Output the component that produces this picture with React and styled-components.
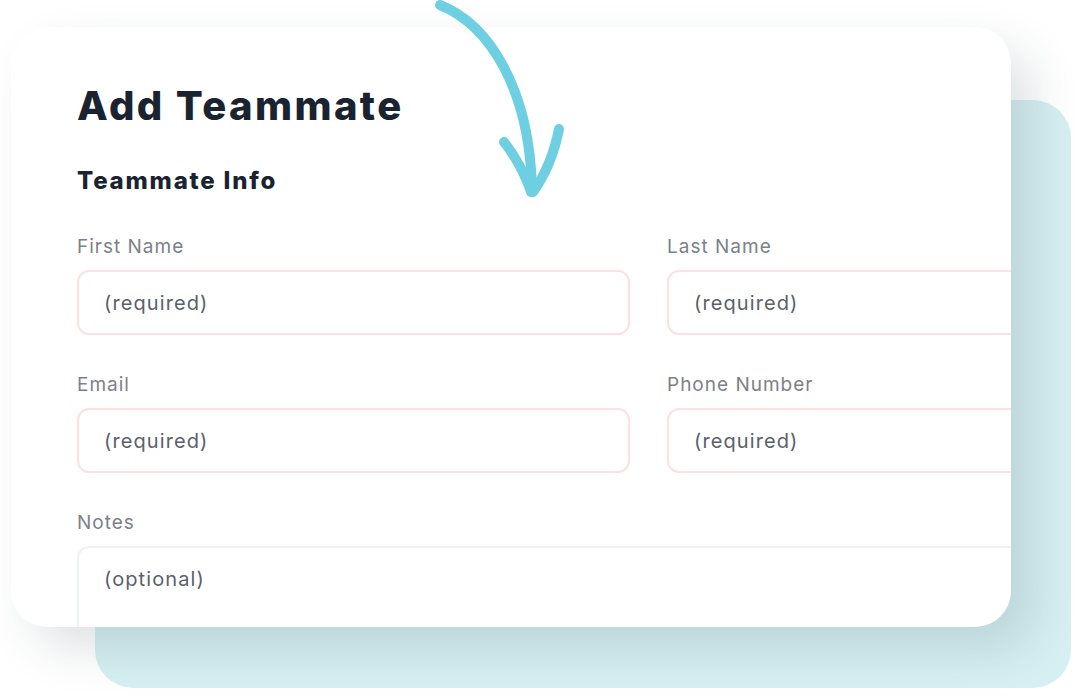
import React from 'react';
import styled, { createGlobalStyle } from 'styled-components';

const GlobalStyle = createGlobalStyle`
  html, body {
    margin: 0;
    padding: 0;
    background: #ffffff;
  }
  body {
    font-family: Inter, "Noto Sans", sans-serif;
    -webkit-font-smoothing: antialiased;
  }
`;

export const Stage = styled.div`
  position: relative;
  width: 1081px;
  height: 697px;
  overflow: hidden;
  display: grid;
  grid-template-columns: 1fr;
  grid-template-rows: 1fr;
`;

export const Backdrop = styled.div`
  grid-area: 1 / 1;
  align-self: start;
  justify-self: start;
  margin: 100px 0 0 95px;
  width: 976px;
  height: 588px;
  border-radius: 38px;
  background: #d6eff2;
`;

export const Card = styled.section`
  grid-area: 1 / 1;
  align-self: start;
  justify-self: start;
  margin: 27px 0 0 11px;
  width: 1000px;
  height: 600px;
  box-sizing: border-box;
  padding: 55px 0 0 66px;
  border-radius: 36px;
  background: #ffffff;
  overflow: hidden;
  box-shadow: 22px 22px 48px rgba(30, 55, 65, 0.14);
`;

export const Title = styled.h1`
  margin: 0;
  font-size: 40px;
  line-height: 48px;
  font-weight: 800;
  letter-spacing: 2.4px;
  color: #1a2330;
`;

export const SectionTitle = styled.h2`
  margin: 36px 0 0;
  font-size: 24px;
  line-height: 30px;
  font-weight: 800;
  letter-spacing: 1.8px;
  color: #1a2330;
`;

export const FormGrid = styled.div`
  margin-top: 39px;
  width: 1143px;
  display: grid;
  grid-template-columns: 553px 553px;
  column-gap: 37px;
  row-gap: 38px;
`;

export const Field = styled.label`
  display: flex;
  flex-direction: column;
  gap: 11px;
  grid-column: ${(p) => (p.$wide ? '1 / -1' : 'auto')};
`;

export const Label = styled.span`
  font-size: 19px;
  line-height: 24px;
  font-weight: 400;
  color: #7b8189;
  letter-spacing: 1px;
`;

export const Input = styled.div`
  box-sizing: border-box;
  height: ${(p) => (p.$tall ? '120px' : '65px')};
  display: flex;
  align-items: ${(p) => (p.$tall ? 'flex-start' : 'center')};
  padding: ${(p) => (p.$tall ? '18px 25px' : '0 25px')};
  border: 2px solid ${(p) => (p.$optional ? '#edf2f5' : '#fde0df')};
  border-radius: 12px;
  font-size: 20px;
  line-height: 26px;
  color: #59616b;
  letter-spacing: 1.1px;
`;

const Arrow = styled.svg`
  position: absolute;
  left: 0;
  top: 0;
  width: 1081px;
  height: 697px;
  pointer-events: none;
`;

const fields = [
  { label: 'First Name', hint: '(required)' },
  { label: 'Last Name', hint: '(required)' },
  { label: 'Email', hint: '(required)' },
  { label: 'Phone Number', hint: '(required)' },
];

const App = () => {
  return (
    <Stage>
      <GlobalStyle />
      <Backdrop />
      <Card>
        <Title>Add Teammate</Title>
        <SectionTitle>Teammate Info</SectionTitle>
        <FormGrid>
          {fields.map((f) => (
            <Field key={f.label}>
              <Label>{f.label}</Label>
              <Input>{f.hint}</Input>
            </Field>
          ))}
          <Field $wide>
            <Label>Notes</Label>
            <Input $tall $optional>(optional)</Input>
          </Field>
        </FormGrid>
      </Card>
      <Arrow viewBox="0 0 1081 697">
        <g fill="none" stroke="#6dcfe1" strokeWidth="10" strokeLinecap="round" strokeLinejoin="round">
          <path d="M440 5 C490 25 530 90 532 190" />
          <path d="M504 142 Q522 165 531 192" />
          <path d="M559 129 Q552 165 533 192" />
        </g>
      </Arrow>
    </Stage>
  );
};

export default App;
